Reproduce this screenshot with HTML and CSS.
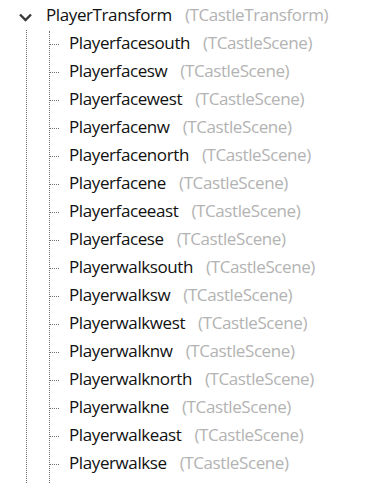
FILE: index.html
```html
<!DOCTYPE html>
<html>
<head>
    <title>Hierarchy</title>
    <meta name="viewport" content="width=device-width, initial-scale=1.0">
    <link rel="stylesheet" href="styles.css">
</head>
<body>
    <div class="tree">
        <div class="node-row">
            <span class="toggle">
                <svg width="16" height="26" viewBox="0 0 16 26">
                    <polyline points="2,11.5 7.5,17 13,11.5" fill="none" stroke="#3a3a3a" stroke-width="2.4"/>
                </svg>
            </span>
            <span class="name">PlayerTransform</span>
            <span class="kind">(TCastleTransform)</span>
        </div>

        <!-- дочерние элементы -->
        <div class="children">
            <div class="child"><span class="name">Playerfacesouth</span><span class="kind">(TCastleScene)</span></div>
            <div class="child"><span class="name">Playerfacesw</span><span class="kind">(TCastleScene)</span></div>
            <div class="child"><span class="name">Playerfacewest</span><span class="kind">(TCastleScene)</span></div>
            <div class="child"><span class="name">Playerfacenw</span><span class="kind">(TCastleScene)</span></div>
            <div class="child"><span class="name">Playerfacenorth</span><span class="kind">(TCastleScene)</span></div>
            <div class="child"><span class="name">Playerfacene</span><span class="kind">(TCastleScene)</span></div>
            <div class="child"><span class="name">Playerfaceeast</span><span class="kind">(TCastleScene)</span></div>
            <div class="child"><span class="name">Playerfacese</span><span class="kind">(TCastleScene)</span></div>
            <div class="child"><span class="name">Playerwalksouth</span><span class="kind">(TCastleScene)</span></div>
            <div class="child"><span class="name">Playerwalksw</span><span class="kind">(TCastleScene)</span></div>
            <div class="child"><span class="name">Playerwalkwest</span><span class="kind">(TCastleScene)</span></div>
            <div class="child"><span class="name">Playerwalknw</span><span class="kind">(TCastleScene)</span></div>
            <div class="child"><span class="name">Playerwalknorth</span><span class="kind">(TCastleScene)</span></div>
            <div class="child"><span class="name">Playerwalkne</span><span class="kind">(TCastleScene)</span></div>
            <div class="child"><span class="name">Playerwalkeast</span><span class="kind">(TCastleScene)</span></div>
            <div class="child"><span class="name">Playerwalkse</span><span class="kind">(TCastleScene)</span></div>
        </div>
    </div>
</body>
</html>
```

FILE: styles.css
```css
/* базовые стили */
body {
    margin: 0;
    background: #ffffff;
    font-family: 'Open Sans', 'Noto Sans', sans-serif;
    font-size: 17px;
    letter-spacing: -0.4px;
    overflow: hidden;
}

.tree {
    margin-left: 26px;
    border-left: 1px dotted #6e6e6e;
    min-height: 100vh;
}

/* корневой узел */
.node-row {
    display: flex;
    align-items: flex-start;
    height: 28px;
    margin-top: 3px;
}

.toggle {
    display: block;
    width: 16px;
    height: 26px;
    margin-left: -9px;
    margin-right: 12px;
    background: #ffffff;
}

.toggle svg {
    display: block;
}

.name {
    color: #111111;
    line-height: 24px;
}

.kind {
    color: #b3b3b3;
    line-height: 24px;
    margin-left: 13px;
}

/* дочерние узлы */
.children {
    margin-left: 22px;
    border-left: 1px dotted #6e6e6e;
    min-height: 460px;
}

.child {
    display: flex;
    align-items: flex-start;
    height: 28px;
}

.child::before {
    content: '';
    width: 9px;
    margin-top: 13px;
    margin-right: 10px;
    border-top: 1px dotted #6e6e6e;
}
```
